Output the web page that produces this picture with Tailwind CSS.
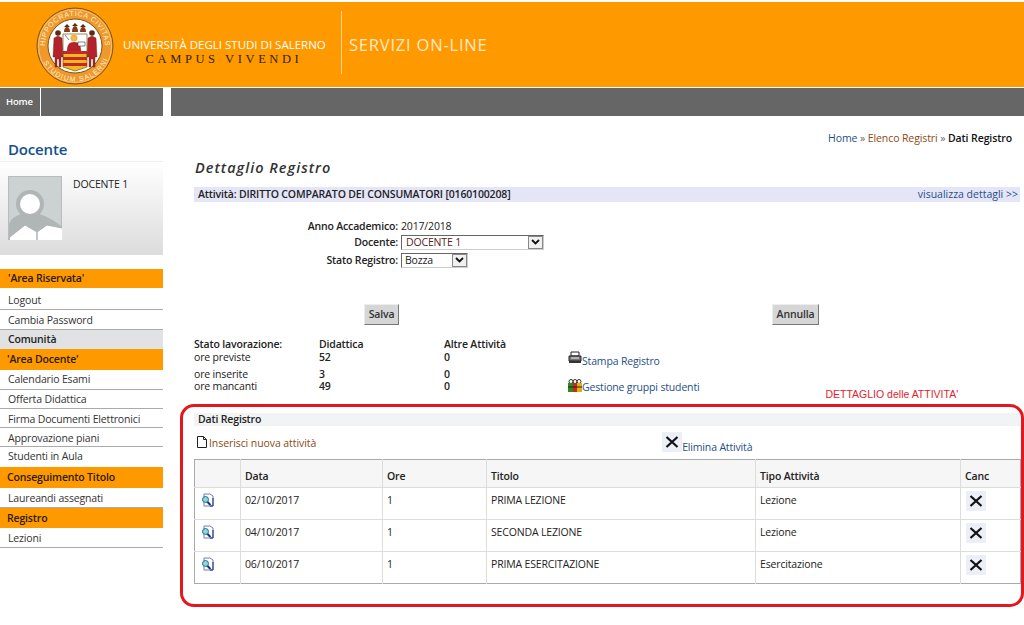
<!DOCTYPE html>
<html lang="it">
<head>
    <meta charset="UTF-8">
    <title>Dettaglio Registro</title>
    <script src="https://cdn.jsdelivr.net/npm/@tailwindcss/browser@4"></script>
</head>
<body class="bg-white font-['Open_Sans',sans-serif] text-[10.5px] leading-[13px] tracking-[-0.16px] text-[#222] overflow-hidden h-[625px]">
    <!-- testata -->
    <header class="mt-[2px] h-[85px] bg-[#ff9900] flex items-start">
        <svg class="ml-[36px] mt-[5px] w-[78px] h-[78px] shrink-0" viewBox="0 0 78 78">
            <defs>
                <path id="ring-top" d="M9 39 A30 30 0 0 1 69 39"/>
                <path id="ring-bottom" d="M3.500 39 A35.500 35.500 0 0 0 74.500 39"/>
            </defs>
            <circle cx="39" cy="39" r="38" fill="#f0982a" stroke="#7a5416" stroke-width="1"/>
            <circle cx="39" cy="39" r="36.500" fill="none" stroke="#fbe3b0" stroke-width="0.6"/>
            <circle cx="39" cy="39" r="27" fill="#fff" stroke="#7a5416" stroke-width="1"/>
            <text font-family="Liberation Sans" font-size="7" letter-spacing="0.7" fill="#fff3d8"><textPath href="#ring-top" startOffset="0%">HIPPOCRATICA CIVITAS</textPath></text>
            <text font-family="Liberation Sans" font-size="7" letter-spacing="1.2" fill="#fff3d8"><textPath href="#ring-bottom" startOffset="15%">STUDIUM SALERNI</textPath></text>
            <!-- scudo -->
            <path d="M27 27h24v17H27z" fill="#fff"/>
            <path d="M27 44h24v16l-12 4-12-4z" fill="#f2b91e"/>
            <path d="M27 44h24v3H27zM27 50h24v3H27zM27 56h24v3H27z" fill="#c5282a"/>
            <path d="M27 27h24v33l-12 4-12-4z" fill="none" stroke="#7a5416" stroke-width="0.7"/>
            <circle cx="38" cy="31" r="3.500" fill="#f2b91e"/>
            <circle cx="38" cy="31.500" r="2" fill="#e8b48a"/>
            <path d="M31 44c0-6 2-9 7-9s7 3 7 9z" fill="#b5232a"/>
            <path d="M42 35h7v4h-7z" fill="#fff" stroke="#333" stroke-width="0.6"/>
            <path d="M29 28l4 5" stroke="#555" stroke-width="0.7"/>
            <!-- figure laterali -->
            <circle cx="22" cy="26" r="2.800" fill="#5a2c14"/>
            <circle cx="56" cy="26" r="2.800" fill="#5a2c14"/>
            <path d="M18 31l4-2 4 2 1 19h-2v10h-2v-8h-2v8h-2V50h-2z" fill="#b5232a" stroke="#4a2a12" stroke-width="0.4"/>
            <path d="M52 31l4-2 4 2 1 19h-2v10h-2v-8h-2v8h-2V50h-2z" fill="#b5232a" stroke="#4a2a12" stroke-width="0.4"/>
            <!-- teste in alto -->
            <path d="M28 25c0-3 1-5 3-5s3 2 3 5zM36 25c0-3 1-6 3-6s3 3 3 6zM44 25c0-3 1-5 3-5s3 2 3 5z" fill="#8a3a1c"/>
            <path d="M28 20l3-3 3 3zM36 19l3-3 3 3zM44 20l3-3 3 3z" fill="#5a2c14"/>
        </svg>
        <div class="ml-[9px] mt-[35px] w-[202px] text-center shrink-0">
            <div class="text-white text-[11.500px] leading-[15px] whitespace-nowrap tracking-[0px]">UNIVERSITÀ DEGLI STUDI DI SALERNO</div>
            <div class="font-['Liberation_Serif',serif] text-[#33210a] text-[12.500px] leading-[14px] tracking-[3.6px] whitespace-nowrap">CAMPUS VIVENDI</div>
        </div>
        <div class="ml-[16px] mt-[9px] w-px h-[63px] bg-[#ffd699]"></div>
        <div class="ml-[7px] mt-[33px] text-[#ffe9c8] text-[16.500px] leading-[20px] tracking-[0.8px]">SERVIZI ON-LINE</div>
    </header>

    <!-- barra grigia -->
    <nav class="mt-px h-[28px] flex gap-[8px]">
        <div class="w-[163px] bg-[#666] flex">
            <div class="w-[41px] border-r border-white text-white font-semibold text-[9.500px] leading-[28px] pl-[6px]">Home</div>
        </div>
        <div class="flex-1 bg-[#666]"></div>
    </nav>

    <div class="flex">
        <!-- colonna sinistra -->
        <aside class="w-[163px] shrink-0 text-[#333]">
            <h2 class="mt-[24px] h-[22px] pl-[8px] border-b border-[#eee] text-[#13508f] font-semibold text-[15px] leading-[19px]">Docente</h2>
            <div class="h-[93px] bg-gradient-to-b from-white to-[#dcdcdc] flex pl-[8px] pt-[14px]">
                <svg class="w-[54px] h-[64px] shrink-0" viewBox="0 0 54 64">
                    <rect width="54" height="64" fill="#ccd2d2"/>
                    <rect x="0.500" y="0.500" width="53" height="63" fill="none" stroke="#b8bcbc"/>
                    <path d="M1 63V50c0-7 8-11 15-13h12c8 2 16 6 25 13v13z" fill="#b0b5b5"/>
                    <circle cx="22" cy="28" r="12" fill="#fff" stroke="#b0b5b5" stroke-width="4"/>
                    <path d="M2 64v-3l15-12 12 7 10-7 15 3v12z" fill="#fff"/>
                    <path d="M29 56v8" stroke="#b0b5b5" stroke-width="1.500"/>
                    <path d="M2 61l15-12 12 7 10-7 15 3" fill="none" stroke="#b0b5b5"/>
                </svg>
                <div class="ml-[11px] mt-[2px] text-[#222]">DOCENTE 1</div>
            </div>
            <div class="mt-[14px] h-[19px] bg-[#ff9900] pl-[8px] font-semibold leading-[19px] text-[#2a1a00]">'Area Riservata'</div>
            <div class="mt-[3px] h-[19px] pl-[8px] leading-[19px] border-b border-[#aaa]">Logout</div>
            <div class="h-[20px] pl-[8px] leading-[20px] border-b border-[#aaa]">Cambia Password</div>
            <div class="h-[19px] bg-[#e0e2e4] pl-[8px] font-semibold leading-[18px] text-[#222]">Comunità</div>
            <div class="h-[21px] bg-[#ff9900] pl-[7px] font-semibold leading-[21px] text-[#2a1a00]">'Area Docente'</div>
            <div class="h-[19px] pl-[8px] leading-[19px] border-b border-[#aaa] box-content -mb-px">Calendario Esami</div>
            <div class="h-[20px] pl-[8px] leading-[21px] border-b border-[#aaa]">Offerta Didattica</div>
            <div class="h-[19px] pl-[8px] leading-[20px] border-b border-[#aaa]">Firma Documenti Elettronici</div>
            <div class="h-[19px] pl-[8px] leading-[20px] border-b border-[#aaa]">Approvazione piani</div>
            <div class="h-[20px] pl-[8px] leading-[19px]">Studenti in Aula</div>
            <div class="h-[21px] bg-[#ff9900] pl-[7px] font-semibold leading-[21px] text-[#2a1a00]">Conseguimento Titolo</div>
            <div class="h-[20px] pl-[8px] leading-[20px] border-b border-[#aaa]">Laureandi assegnati</div>
            <div class="h-[20px] bg-[#ff9900] pl-[7px] font-semibold leading-[20px] text-[#2a1a00]">Registro</div>
            <div class="h-[20px] pl-[8px] leading-[20px] border-b border-[#aaa]">Lezioni</div>
        </aside>

        <!-- contenuto -->
        <main class="ml-[17px] w-[844px] shrink-0">
            <div class="mt-[16px] h-[13px] pr-[12px] text-right tracking-[-0.1px]">
                <span class="text-[#1f4f86]">Home</span> <span class="text-[#666]">»</span> <span class="text-[#8c4a12]">Elenco Registri</span> <span class="text-[#666]">»</span> <span class="font-semibold text-[#111]">Dati Registro</span>
            </div>
            <h1 class="mt-[13px] ml-[15px] h-[20px] font-semibold italic text-[14.500px] leading-[20px] tracking-[1px] text-[#333]">Dettaglio Registro</h1>
            <div class="mt-[9px] ml-[14px] mr-[4px] h-[15px] bg-[#e4e6f8] flex justify-between pl-[4px] pr-[2px] leading-[15px]">
                <span class="font-semibold text-[#222]">Attività: DIRITTO COMPARATO DEI CONSUMATORI [0160100208]</span>
                <span class="text-[#1f4f86] tracking-[0px]">visualizza dettagli &gt;&gt;</span>
            </div>

            <div class="mt-[17px] grid grid-cols-[218px_1fr] gap-x-[3px] items-center font-semibold">
                <div class="text-right h-[14px] leading-[15px] text-[#222]">Anno Accademico:</div>
                <div class="h-[14px] leading-[15px] font-normal">2017/2018</div>
                <div class="text-right h-[18px] leading-[18px] text-[#222]">Docente:</div>
                <div class="h-[18px] flex items-center">
                    <div class="w-[143px] h-[15px] border border-t-[#666] border-l-[#666] border-r-[#ccc] border-b-[#ccc] flex justify-between items-center pl-[4px] font-normal text-[#522]">DOCENTE 1
                        <span class="w-[15px] h-[13px] border border-[#888] bg-[#f0f0f0] flex items-center justify-center"><svg class="w-[9px] h-[6px]" viewBox="0 0 9 6"><path d="M1 1l3.500 3.500L8 1" fill="none" stroke="#111" stroke-width="1.800"/></svg></span>
                    </div>
                </div>
                <div class="text-right h-[18px] leading-[18px] text-[#222]">Stato Registro:</div>
                <div class="h-[18px] flex items-center">
                    <div class="w-[67px] h-[15px] border border-t-[#666] border-l-[#666] border-r-[#ccc] border-b-[#ccc] flex justify-between items-center pl-[3px] font-normal text-[#222]">Bozza
                        <span class="w-[15px] h-[13px] border border-[#888] bg-[#f0f0f0] flex items-center justify-center"><svg class="w-[9px] h-[6px]" viewBox="0 0 9 6"><path d="M1 1l3.500 3.500L8 1" fill="none" stroke="#111" stroke-width="1.800"/></svg></span>
                    </div>
                </div>
            </div>

            <div class="mt-[35px] h-[21px] flex">
                <button class="ml-[184px] w-[35px] h-[21px] bg-[#d6d6d6] border border-t-[#eee] border-l-[#eee] border-r-[#777] border-b-[#777] font-semibold text-[#333]">Salva</button>
                <button class="ml-[373px] w-[47px] h-[21px] bg-[#d6d6d6] border border-t-[#eee] border-l-[#eee] border-r-[#777] border-b-[#777] font-semibold text-[#333]">Annulla</button>
            </div>

            <div class="mt-[13px] ml-[14px] flex h-[67px]">
                <div class="w-[125px]">
                    <div class="h-[13px] font-semibold">Stato lavorazione:</div>
                    <div class="h-[17px]">ore previste</div>
                    <div class="h-[12px]">ore inserite</div>
                    <div class="h-[13px]">ore mancanti</div>
                </div>
                <div class="w-[125px] font-semibold">
                    <div class="h-[13px]">Didattica</div>
                    <div class="h-[17px]">52</div>
                    <div class="h-[12px]">3</div>
                    <div class="h-[13px]">49</div>
                </div>
                <div class="w-[124px] font-semibold">
                    <div class="h-[13px]">Altre Attività</div>
                    <div class="h-[17px]">0</div>
                    <div class="h-[12px]">0</div>
                    <div class="h-[13px]">0</div>
                </div>
                <div class="text-[#1f4f86]">
                    <div class="mt-[15px] h-[15px] flex items-end">
                        <svg class="w-[14px] h-[14px] mb-[3px] shrink-0" viewBox="0 0 14 14"><path d="M3 1h8v4H3z" fill="#fff" stroke="#222"/><path d="M1 5h12v5H1z" fill="#777" stroke="#222"/><path d="M1 10h12v2H1z" fill="#333"/><path d="M3 7h8" stroke="#eee"/></svg>
                        <span>Stampa Registro</span>
                    </div>
                    <div class="mt-[11px] h-[15px] flex items-end">
                        <svg class="w-[14px] h-[13px] mb-[2px] shrink-0" viewBox="0 0 14 13"><circle cx="3" cy="2.500" r="2" fill="none" stroke="#333"/><circle cx="7" cy="2.500" r="2" fill="none" stroke="#333"/><circle cx="11" cy="2.500" r="2" fill="none" stroke="#333"/><rect x="0" y="4" width="5" height="9" fill="#2c8a1f"/><rect x="5" y="4" width="4" height="9" fill="#c92a1c"/><rect x="9" y="4" width="5" height="9" fill="#e0b010"/><path d="M0 8h14" stroke="#222"/></svg>
                        <span>Gestione gruppi studenti</span>
                    </div>
                </div>
                <div class="ml-[126px] mt-[50px] font-['Liberation_Sans',sans-serif] text-[10.500px] tracking-normal text-[#e2232e] whitespace-nowrap">DETTAGLIO delle ATTIVITA'</div>
            </div>

            <!-- riquadro rosso -->
            <section class="-mt-[1px] w-[844px] h-[203px] border-[3px] border-[#e2171f] rounded-[14px] pl-[11px] pt-[6px]">
                <div class="w-[826px] h-[13px] bg-[#f1f3f4] pl-[4px] font-semibold leading-[13px] text-[#222]">Dati Registro</div>
                <div class="h-[33px] flex">
                    <svg class="mt-[10px] w-[10px] h-[12px] ml-[3px]" viewBox="0 0 10 12"><path d="M.5.500h6l3 3v8h-9z" fill="#fff" stroke="#222"/><path d="M6.500.500v3h3" fill="none" stroke="#222"/></svg>
                    <span class="ml-[2px] mt-[11px] text-[#8c4a12] tracking-[-0.08px]">Inserisci nuova attività</span>
                    <span class="ml-[346px] mt-[6px] w-[20px] h-[20px] bg-[#eceef8] flex items-center justify-center shrink-0"><svg class="w-[14px] h-[14px]" viewBox="0 0 14 14"><path d="M1.500 2l11 10M12.500 2l-11 10" stroke="#111" stroke-width="2.200"/></svg></span>
                    <span class="mt-[15px] text-[#1f4f86]">Elimina Attività</span>
                </div>
                <table class="w-[826px] table-fixed border-collapse border border-[#aaa] text-[#222]">
                    <colgroup><col class="w-[46px]"><col class="w-[142px]"><col class="w-[104px]"><col class="w-[269px]"><col class="w-[205px]"><col class="w-[60px]"></colgroup>
                    <thead>
                        <tr class="h-[28px] bg-[#f6f6f6] font-semibold text-left">
                            <th class="border-r border-b border-[#ddd] font-semibold"></th>
                            <th class="border-r border-b border-[#ddd] font-semibold pl-[4px] pt-[5px]">Data</th>
                            <th class="border-r border-b border-[#ddd] font-semibold pl-[4px] pt-[5px]">Ore</th>
                            <th class="border-r border-b border-[#ddd] font-semibold pl-[4px] pt-[5px]">Titolo</th>
                            <th class="border-r border-b border-[#ddd] font-semibold pl-[4px] pt-[5px]">Tipo Attività</th>
                            <th class="border-b border-[#ddd] font-semibold pl-[4px] pt-[5px]">Canc</th>
                        </tr>
                    </thead>
                    <tbody>
                        <tr class="h-[32px] align-top">
                            <td class="border-r border-b border-[#ddd] pl-[6px] pt-[5px]"><svg class="w-[13px] h-[14px]" viewBox="0 0 13 14"><path d="M3 1h6l3 2v10H3z" fill="#fff" stroke="#6f7fa5"/><circle cx="4.500" cy="6.500" r="3" fill="#8fd4d8" stroke="#1f6f85"/><path d="M6.500 9l3 3" stroke="#142f90" stroke-width="2"/><path d="M12 5v8H9" fill="none" stroke="#142f90"/></svg></td>
                            <td class="border-r border-b border-[#ddd] pl-[4px] pt-[6px]">02/10/2017</td>
                            <td class="border-r border-b border-[#ddd] pl-[4px] pt-[6px]">1</td>
                            <td class="border-r border-b border-[#ddd] pl-[4px] pt-[6px]">PRIMA LEZIONE</td>
                            <td class="border-r border-b border-[#ddd] pl-[4px] pt-[6px]">Lezione</td>
                            <td class="border-b border-[#ddd] pl-[5px] pt-[3px]"><span class="w-[20px] h-[20px] bg-[#eceef8] flex items-center justify-center"><svg class="w-[14px] h-[14px]" viewBox="0 0 14 14"><path d="M1.500 2l11 10M12.500 2l-11 10" stroke="#111" stroke-width="2.200"/></svg></span></td>
                        </tr>
                        <tr class="h-[32px] align-top">
                            <td class="border-r border-b border-[#ddd] pl-[6px] pt-[5px]"><svg class="w-[13px] h-[14px]" viewBox="0 0 13 14"><path d="M3 1h6l3 2v10H3z" fill="#fff" stroke="#6f7fa5"/><circle cx="4.500" cy="6.500" r="3" fill="#8fd4d8" stroke="#1f6f85"/><path d="M6.500 9l3 3" stroke="#142f90" stroke-width="2"/><path d="M12 5v8H9" fill="none" stroke="#142f90"/></svg></td>
                            <td class="border-r border-b border-[#ddd] pl-[4px] pt-[6px]">04/10/2017</td>
                            <td class="border-r border-b border-[#ddd] pl-[4px] pt-[6px]">1</td>
                            <td class="border-r border-b border-[#ddd] pl-[4px] pt-[6px]">SECONDA LEZIONE</td>
                            <td class="border-r border-b border-[#ddd] pl-[4px] pt-[6px]">Lezione</td>
                            <td class="border-b border-[#ddd] pl-[5px] pt-[3px]"><span class="w-[20px] h-[20px] bg-[#eceef8] flex items-center justify-center"><svg class="w-[14px] h-[14px]" viewBox="0 0 14 14"><path d="M1.500 2l11 10M12.500 2l-11 10" stroke="#111" stroke-width="2.200"/></svg></span></td>
                        </tr>
                        <tr class="h-[32px] align-top">
                            <td class="border-r border-[#ddd] pl-[6px] pt-[5px]"><svg class="w-[13px] h-[14px]" viewBox="0 0 13 14"><path d="M3 1h6l3 2v10H3z" fill="#fff" stroke="#6f7fa5"/><circle cx="4.500" cy="6.500" r="3" fill="#8fd4d8" stroke="#1f6f85"/><path d="M6.500 9l3 3" stroke="#142f90" stroke-width="2"/><path d="M12 5v8H9" fill="none" stroke="#142f90"/></svg></td>
                            <td class="border-r border-[#ddd] pl-[4px] pt-[6px]">06/10/2017</td>
                            <td class="border-r border-[#ddd] pl-[4px] pt-[6px]">1</td>
                            <td class="border-r border-[#ddd] pl-[4px] pt-[6px]">PRIMA ESERCITAZIONE</td>
                            <td class="border-r border-[#ddd] pl-[4px] pt-[6px]">Esercitazione</td>
                            <td class="pl-[5px] pt-[3px]"><span class="w-[20px] h-[20px] bg-[#eceef8] flex items-center justify-center"><svg class="w-[14px] h-[14px]" viewBox="0 0 14 14"><path d="M1.500 2l11 10M12.500 2l-11 10" stroke="#111" stroke-width="2.200"/></svg></span></td>
                        </tr>
                    </tbody>
                </table>
            </section>
        </main>
    </div>
</body>
</html>
